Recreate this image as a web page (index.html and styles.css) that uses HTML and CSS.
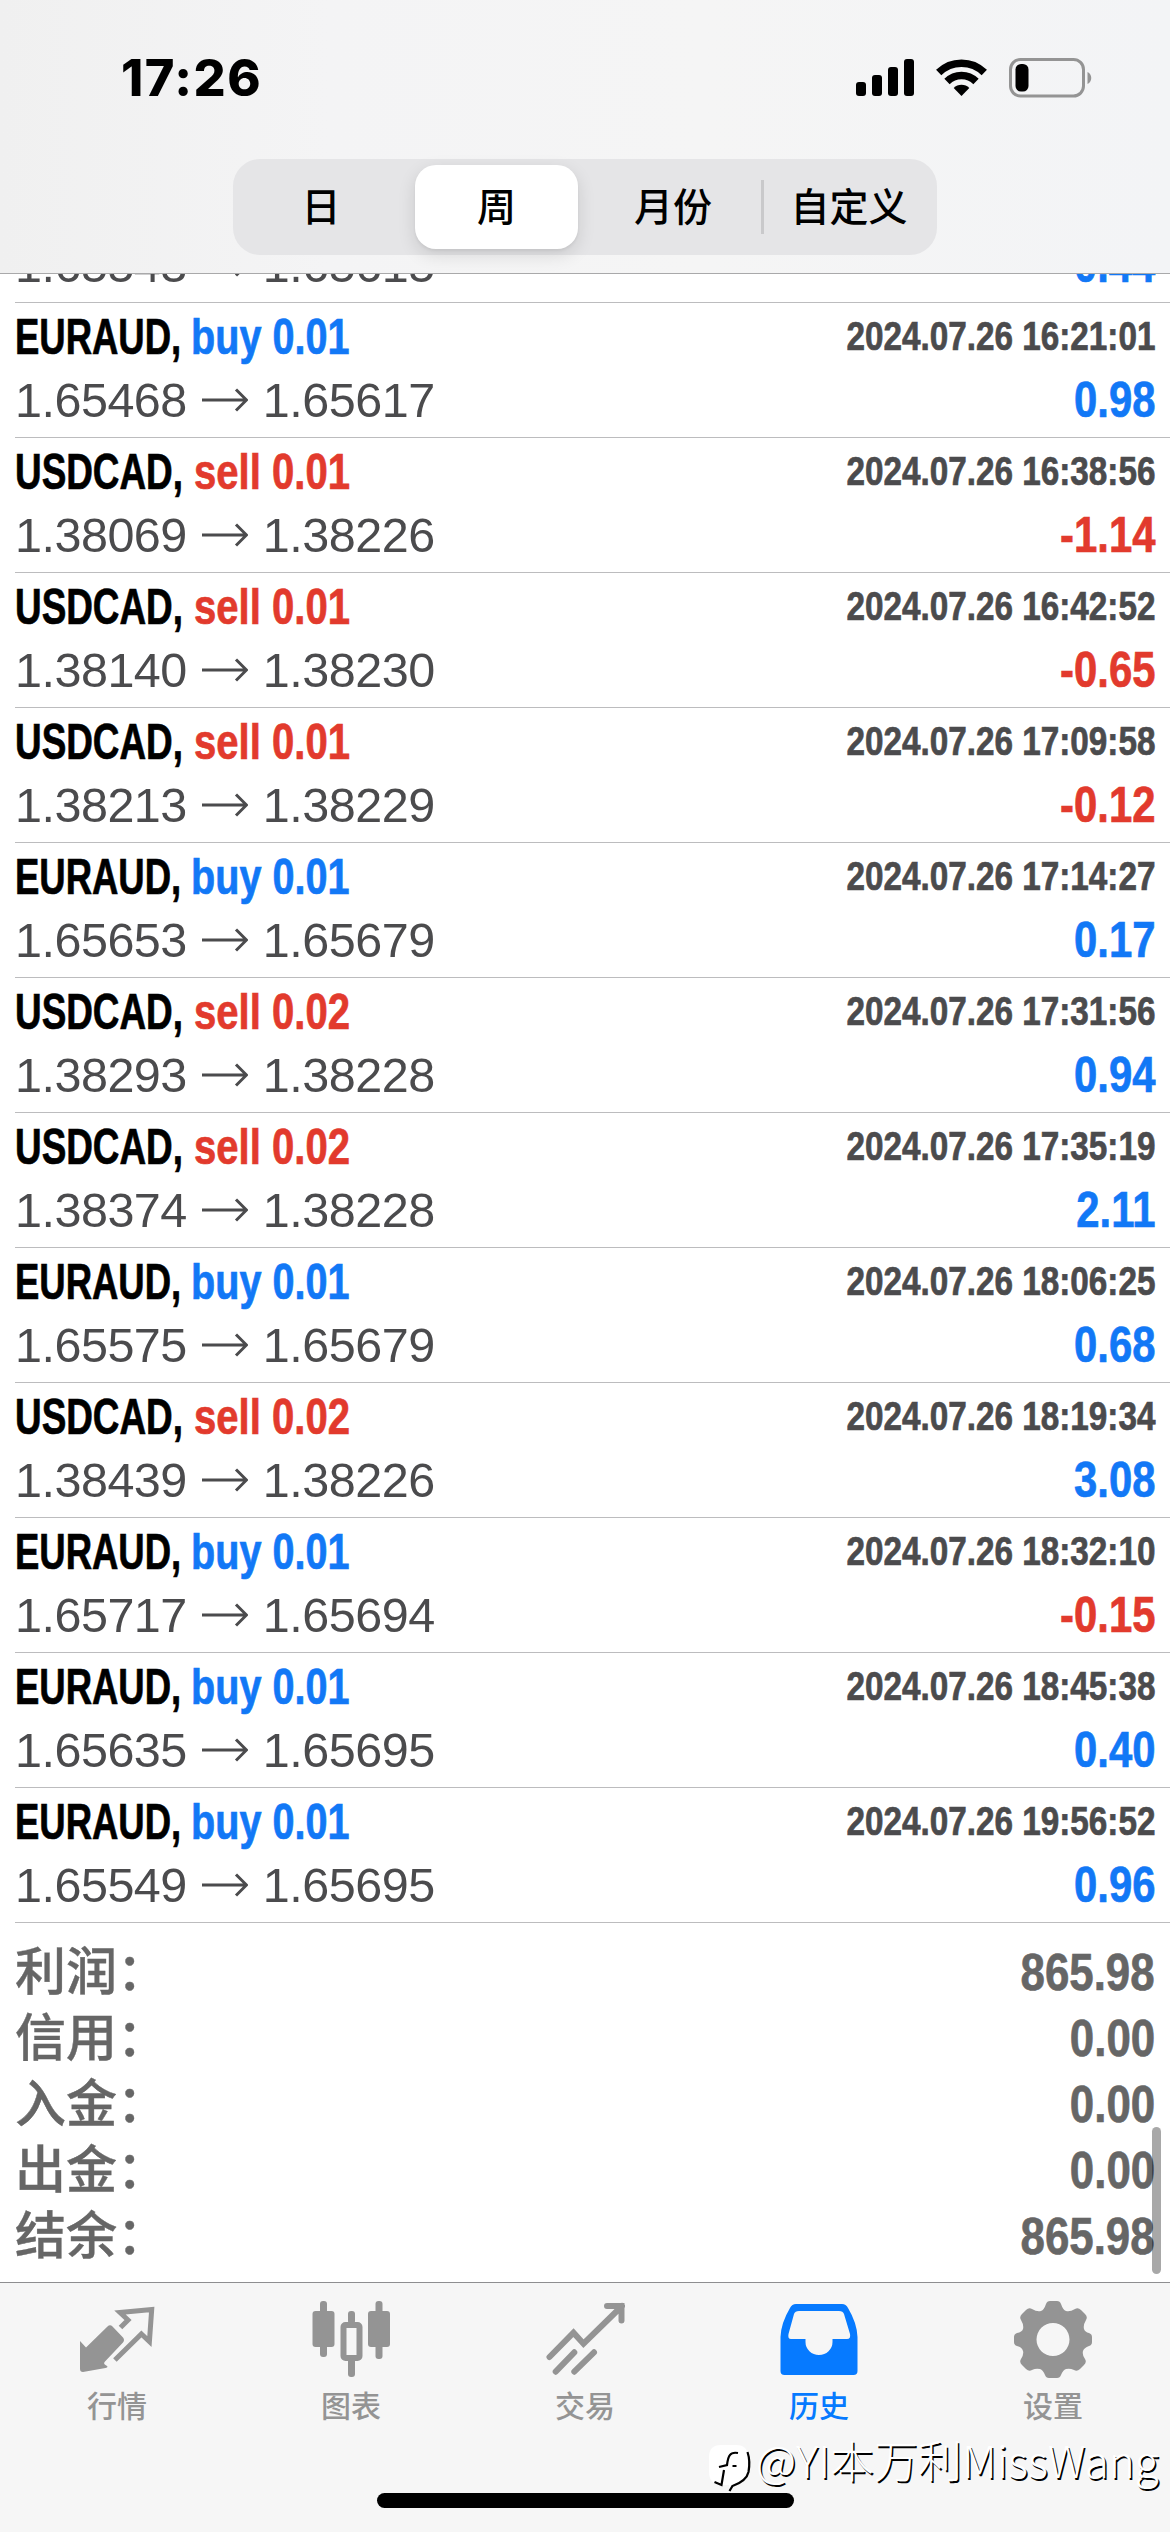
FILE: index.html
```html
<!DOCTYPE html>
<html lang="zh-CN">
<head>
<meta charset="utf-8">
<title>历史</title>
<link rel="stylesheet" href="styles.css">
</head>
<body>
<div class="screen">
  <header class="header">
    <div class="status">
      <span class="clock">17:26</span>
      <span class="status-icons">
        <svg class="signal" width="58" height="38" viewBox="0 0 58 38"><rect x="0" y="23" width="10" height="14" rx="3"/><rect x="16" y="16" width="10" height="21" rx="3"/><rect x="32" y="8" width="10" height="29" rx="3"/><rect x="48" y="0" width="10" height="37" rx="3"/></svg>
        <svg class="wifi" width="51" height="38" viewBox="0 0 51 38"><g fill="none" stroke="#000"><path stroke-width="7.500" d="M2.700 13.500a32.500 32.500 0 0 1 45.600 0"/><path stroke-width="7.500" d="M11 22.500a20.500 20.500 0 0 1 29 0"/></g><path d="M25.500 37l-7.800-8a11 11 0 0 1 15.600 0z"/></svg>
        <svg class="battery" width="84" height="40" viewBox="0 0 84 40"><rect x="1.500" y="1.500" width="73" height="36.500" rx="10" fill="none" stroke="#949494" stroke-width="3"/><path d="M78.500 14c5 2 5 10 0 12z" fill="#949494"/><rect x="6.500" y="6" width="13" height="27.500" rx="5.500"/></svg>
      </span>
    </div>
    <nav class="segments">
      <span class="segment">日</span>
      <span class="segment active">周</span>
      <span class="segment">月份</span>
      <span class="segment divided">自定义</span>
    </nav>
  </header>

  <main class="history">
    <ul class="deals" id="deals"></ul>
    <dl class="totals">
      <div class="total"><dt>利润：</dt><dd>865.98</dd></div>
      <div class="total"><dt>信用：</dt><dd>0.00</dd></div>
      <div class="total"><dt>入金：</dt><dd>0.00</dd></div>
      <div class="total"><dt>出金：</dt><dd>0.00</dd></div>
      <div class="total"><dt>结余：</dt><dd>865.98</dd></div>
    </dl>
    <div class="scrollbar"></div>
  </main>

  <footer class="tabbar">
    <nav class="tabs">
      <a class="tab"><svg width="80" height="80" viewBox="0 0 80 80"><path d="M3 41l6 6.500L30.500 26.500q2.500-2.500 5 0l10.500 11q2 2.500 0 5L28 61.500q-2 2 .5 3.500 4 2 0 3L6 72q-3 0-3-3z"/><path d="M43.500 27.500l7.500-7.500-8-7.500 31.700-3-2.300 32-8-7.500-26.500 26" fill="none" stroke="currentColor" stroke-width="5"/></svg><span>行情</span></a>
      <a class="tab"><svg width="80" height="80" viewBox="0 0 80 80"><rect x="1.500" y="11" width="22" height="36" rx="3"/><rect x="9" y="1" width="7" height="56" rx="3"/><rect x="57" y="11" width="22" height="36" rx="3"/><rect x="64.500" y="1" width="7" height="58" rx="3"/><rect x="32.500" y="25" width="16" height="33" rx="2" fill="none" stroke="currentColor" stroke-width="6"/><rect x="37" y="11" width="7" height="13" rx="3"/><rect x="37" y="58" width="7" height="19" rx="3"/></svg><span>图表</span></a>
      <a class="tab"><svg width="80" height="80" viewBox="0 0 80 80"><g fill="none" stroke="currentColor" stroke-width="6" stroke-linecap="round"><path d="M4.500 57l24-24.300 10 11L77 6M62 6h14.500v14.500"/><path d="M10.700 71.700l18.600-19.400M29.300 71.700L49 52.300"/></g></svg><span>交易</span></a>
      <a class="tab selected"><svg width="80" height="80" viewBox="0 0 80 80"><path fill-rule="evenodd" d="M17 4h46q4 0 6 4 9 15 9.500 29v34q0 4-4 4h-69q-4 0-4-4V37Q2 23 11 8q2-4 6-4zm3 7q-4 0-5 3L9.500 34q-1 5 2.500 5h14.500v3a13.500 13 0 0 0 27 0v-3H68q4 0 3-5l-6-20q-1-3-5-3z"/></svg><span>历史</span></a>
      <a class="tab"><svg width="80" height="80" viewBox="0 0 80 80"><path fill-rule="evenodd" d="M36 1h8q3 0 4 3 2 6 5 7 4 1 9-2 3-2 6 1l4 4q3 3 1 6-3 5-2 9 1 3 5 4 3 1 3 4v5q0 3-3 4-5 2-6 5-1 4 2 8 2 3-1 6l-4 4q-3 3-6 1-4-2-8-1-3 1-5 6-1 3-4 3h-8q-3 0-4-3-2-5-5-6-4-1-8 1-3 2-6-1l-4-4q-3-3-1-6 3-5 2-8-1-4-6-5-3-1-3-4v-5q0-3 3-4 5-1 6-4 1-4-2-9-2-3 1-6l4-4q3-3 6-1 5 3 9 2 3-1 5-7 1-3 4-3zM40 23a16.500 16.500 0 1 0 0 33 16.500 16.500 0 0 0 0-33z"/></svg><span>设置</span></a>
    </nav>
    <div class="home-indicator"></div>
    <div class="watermark">
      <svg width="44" height="50" viewBox="0 0 44 50"><path d="M12 1h15q12 0 12 12v14q0 10-10 12l-8 8-1-6h-8Q0 40 0 28V13Q0 1 12 1z" fill="#fff"/><g fill="none" stroke="#000" stroke-width="2.200"><path d="M29 9q-6-1-8 2-2 2-3 10l-8 2M15 26l-2.500 15-7-3M23.500 22h4"/><path d="M38.500 8q3 9 1 20-2 9-16 14l-3 5"/></g></svg>
      <span>@YI本万利MissWang</span>
    </div>
  </footer>
</div>
<script src="deals.js"></script>
</body>
</html>
```
FILE: styles.css
```css
* { box-sizing: border-box; }
body { margin: 0; background: #fff; font-family: "Liberation Sans", "Noto Sans CJK SC", sans-serif; }
.screen { width: 1170px; height: 2532px; display: flex; flex-direction: column; overflow: hidden; position: relative; }

.header { height: 274px; flex: none; border-bottom: 1px solid #a9a9aa; background: linear-gradient(90deg, #f0f0f0, #f4f4f5 28%, #f5f5f5 60%, #f3f4f6); display: flex; flex-direction: column; align-items: center; }
.status { width: 100%; height: 159px; padding: 58px 77px 0 121px; display: flex; justify-content: space-between; align-items: flex-start; }
.clock { font: 800 50.500px/40px Inter, sans-serif; letter-spacing: 1.500px; }
.status-icons { display: flex; align-items: flex-start; }
.signal { margin: 1px 22px 0 0; }
.wifi { margin: 1px 22px 0 0; }
.segments { width: 704px; height: 96px; padding: 6px 0; border-radius: 27px; background: #e5e5e7; display: grid; grid-template-columns: repeat(4, 1fr); }
.segment { display: flex; align-items: center; justify-content: center; padding-bottom: 7px; font: 500 39px/60px "Noto Sans CJK SC", sans-serif; }
.segment.active { margin: 0 7px 0 6px; background: #fff; border-radius: 21px; box-shadow: 0 6px 18px rgba(0,0,0,.12), 0 2px 3px rgba(0,0,0,.05); }
.segment.divided { background: linear-gradient(#c9c9cb, #c9c9cb) 0 50% / 3px 54px no-repeat; }

.history { height: 2008px; flex: none; position: relative; overflow: hidden; }
.deals { list-style: none; margin: -39px 0 0; padding: 0 0 0 15px; }
.deal { height: 135px; padding: 2px 15px 0 0; border-bottom: 1px solid #bcbcbe; display: grid; grid-template-columns: auto auto; grid-template-rows: 65px 60px; justify-content: space-between; }
.deal.partial { height: 68px; padding-top: 0; grid-template-rows: 60px; }
.title { font: 700 49.500px/63px "Liberation Sans", sans-serif; color: #000; white-space: nowrap; display: flex; }
.title span { transform-origin: 0 50%; }
.title, .time, .profit, .total dd { -webkit-text-stroke: .7px currentColor; }
.buy .symbol { width: 176px; transform: scaleX(.737); }
.sell .symbol { width: 179px; transform: scaleX(.745); }
.buy .order { transform: scaleX(.8); }
.sell .order { transform: scaleX(.81); }
.buy .order, .up { color: #1278f6; }
.sell .order, .down { color: #e23a2d; }
.time { font: 700 40px/62px "Liberation Sans", sans-serif; color: #4b4b4d; white-space: nowrap; transform: scaleX(.832); transform-origin: 100% 50%; text-align: right; }
.prices { font: 400 48.500px/60px "Liberation Sans", sans-serif; letter-spacing: -.5px; color: #4b4b4d; display: flex; align-items: center; }
.prices svg { margin: 0 15px 0 15px; }
.profit { font: 700 49.500px/60px "Liberation Sans", sans-serif; transform: scaleX(.845); transform-origin: 100% 50%; text-align: right; }

.totals { margin: 0; padding: 17px 15px 0; }
.total { height: 66px; display: flex; justify-content: space-between; color: #666; }
.total dt { font: 500 51px/57px "Noto Sans CJK SC", sans-serif; -webkit-text-stroke: .4px currentColor; }
.total dd { margin: 0; font: 700 52.500px/64px "Liberation Sans", sans-serif; transform: scaleX(.835); transform-origin: 100% 50%; }
.scrollbar { position: absolute; right: 9px; bottom: 8px; width: 9px; height: 147px; border-radius: 5px; background: rgba(0,0,0,.34); }

.tabbar { flex: 1; position: relative; background: #f6f6f6; border-top: 1px solid #8e8e90; display: flex; flex-direction: column; align-items: center; }
.tabs { width: 100%; height: 210px; display: grid; grid-template-columns: repeat(5, 1fr); }
.tab { display: flex; flex-direction: column; align-items: center; padding-top: 17px; color: #949494; font: 500 30px/44px "Noto Sans CJK SC", sans-serif; }
.tab svg { fill: currentColor; margin-bottom: 2px; }
.tab.selected { color: #067aff; }
.home-indicator { width: 417px; height: 15px; border-radius: 8px; background: #000; }
.watermark { position: absolute; left: 709px; top: 161px; display: flex; align-items: flex-start; gap: 3px; color: #fff; font: 300 44px/50px "Noto Sans CJK SC", sans-serif; white-space: nowrap; text-shadow: 1.500px 1.500px 0 #000; }
.watermark span { margin-top: -10px; }
```
FILE: deals.js
```js
const deals = [
  ["EURAUD", "buy 0.01", "2024.07.26 16:21:01", "1.65468", "1.65617", "0.98"],
  ["USDCAD", "sell 0.01", "2024.07.26 16:38:56", "1.38069", "1.38226", "-1.14"],
  ["USDCAD", "sell 0.01", "2024.07.26 16:42:52", "1.38140", "1.38230", "-0.65"],
  ["USDCAD", "sell 0.01", "2024.07.26 17:09:58", "1.38213", "1.38229", "-0.12"],
  ["EURAUD", "buy 0.01", "2024.07.26 17:14:27", "1.65653", "1.65679", "0.17"],
  ["USDCAD", "sell 0.02", "2024.07.26 17:31:56", "1.38293", "1.38228", "0.94"],
  ["USDCAD", "sell 0.02", "2024.07.26 17:35:19", "1.38374", "1.38228", "2.11"],
  ["EURAUD", "buy 0.01", "2024.07.26 18:06:25", "1.65575", "1.65679", "0.68"],
  ["USDCAD", "sell 0.02", "2024.07.26 18:19:34", "1.38439", "1.38226", "3.08"],
  ["EURAUD", "buy 0.01", "2024.07.26 18:32:10", "1.65717", "1.65694", "-0.15"],
  ["EURAUD", "buy 0.01", "2024.07.26 18:45:38", "1.65635", "1.65695", "0.40"],
  ["EURAUD", "buy 0.01", "2024.07.26 19:56:52", "1.65549", "1.65695", "0.96"],
];

const arrow = '<svg width="46" height="24" viewBox="0 0 46 24"><path d="M0 12h44M34 1.500L44.500 12 34 22.500" fill="none" stroke="currentColor" stroke-width="3"/></svg>';

const priceLine = (open, close, profit) => `
    <div class="prices"><span>${open}</span>${arrow}<span>${close}</span></div>
    <div class="profit ${profit.startsWith("-") ? "down" : "up"}">${profit}</div>`;

// The topmost row is scrolled under the header, so only its price line is built.
const partial = `<li class="deal partial">${priceLine("1.65543", "1.65615", "0.44")}</li>`;

document.getElementById("deals").innerHTML = partial + deals.map(([symbol, order, time, open, close, profit]) => `
  <li class="deal ${order.split(" ")[0]}">
    <div class="title"><span class="symbol">${symbol},</span><span class="order">${order}</span></div>
    <div class="time">${time}</div>${priceLine(open, close, profit)}
  </li>`).join("");
```
